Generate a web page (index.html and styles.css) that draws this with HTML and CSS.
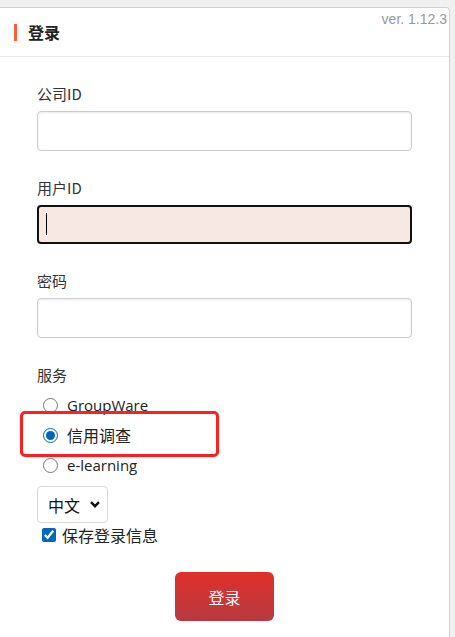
FILE: index.html
```html
<!DOCTYPE html>
<html>
    <head>
        <title>登录</title>
        <link rel="stylesheet" href="styles.css">
    </head>
    <body>
        <div class="card">
            <div class="card-head">
                <h1 class="title">登录</h1>
                <span class="version">ver. 1.12.3</span>
            </div>
            <form class="login">
                <div class="field">
                    <label class="label">公司ID</label>
                    <input type="text" class="input">
                </div>
                <div class="field">
                    <label class="label">用户ID</label>
                    <div class="input-wrap">
                        <input type="text" class="input focused">
                        <span class="caret"></span>
                    </div>
                </div>
                <div class="field">
                    <label class="label">密码</label>
                    <input type="password" class="input">
                </div>
                <div class="field services">
                    <label class="label">服务</label>
                    <label class="option"><input type="radio" name="svc"> <span class="latin">GroupWare</span></label>
                    <label class="option marked"><input type="radio" name="svc" checked> <span>信用调查</span><span class="mark"></span></label>
                    <label class="option"><input type="radio" name="svc"> <span class="latin">e-learning</span></label>
                </div>
                <div class="lang">
                    <select class="select">
                        <option>中文</option>
                    </select>
                    <svg class="chevron" width="10" height="7" viewBox="0 0 10 7"><path d="M1 1.2 L5 5.2 L9 1.2" fill="none" stroke="#111" stroke-width="2.4"/></svg>
                </div>
                <label class="remember"><input type="checkbox" checked> 保存登录信息</label>
                <div class="actions">
                    <button type="button" class="submit">登录</button>
                </div>
            </form>
        </div>
    </body>
</html>
```

FILE: styles.css
```css
html {
    background: #f0f0f0;
}
body {
    margin: 0;
    padding: 7px 5px 0 0;
    font-family: "Noto Sans CJK SC", "Noto Sans", sans-serif;
    color: #333;
}
.card {
    background: #fff;
    border: 1px solid #d0d0d0;
    border-left: none;
    border-bottom: none;
    border-radius: 0 4px 0 0;
    height: 640px;
}
.card-head {
    display: flex;
    justify-content: space-between;
    align-items: flex-start;
    height: 48px;
    border-bottom: 1px solid #e8e8e8;
}
.title {
    margin: 16px 0 0 14px;
    padding-left: 11px;
    border-left: 3px solid #ff5b38;
    font-size: 16px;
    line-height: 17px;
    height: 17px;
    font-weight: bold;
    color: #222;
}
.version {
    font-family: "Liberation Sans", Arial, sans-serif;
    font-size: 14px;
    color: #999;
    margin: 3px 2px 0 0;
}
.login {
    padding: 26px 37px 0 37px;
}
.field {
    margin-bottom: 26px;
}
.label {
    display: block;
    font-size: 15px;
    line-height: 22px;
    margin-bottom: 6px;
}
.input {
    display: block;
    box-sizing: border-box;
    width: 100%;
    height: 40px;
    border: 1px solid #ccc;
    border-radius: 4px;
    box-shadow: inset 0 1px 3px rgba(0, 0, 0, .08);
    background: #fff;
    outline: none;
    margin: 0;
}
.input-wrap {
    position: relative;
}
.focused {
    border: 2px solid #111;
    height: 39px;
    background: #f7e8e4;
    box-shadow: none;
}
.caret {
    position: absolute;
    left: 9px;
    top: 8px;
    width: 1px;
    height: 22px;
    background: #000;
}
.services {
    margin-bottom: 6px;
}
.services .label {
    margin-bottom: 4px;
}
.option {
    display: flex;
    align-items: center;
    height: 30px;
    font-size: 16px;
    color: #222;
    position: relative;
}
.option input {
    width: 15px;
    height: 15px;
    margin: 0 9px 0 6px;
    accent-color: #0067c0;
}
.latin {
    font-family: "Open Sans", "Noto Sans", sans-serif;
    font-size: 15px;
}
.mark {
    position: absolute;
    left: -17px;
    top: -9px;
    width: 199px;
    height: 46px;
    box-sizing: border-box;
    border: 3px solid #ff1f1f;
    border-radius: 5px;
}
.lang {
    position: relative;
    width: 71px;
}
.select {
    appearance: none;
    box-sizing: border-box;
    width: 71px;
    height: 37px;
    border: 1px solid #d8d8d8;
    border-radius: 4px;
    background: #fff;
    padding: 0 0 0 10px;
    font-family: "Noto Sans CJK SC", sans-serif;
    font-size: 16px;
    color: #111;
}
.chevron {
    position: absolute;
    right: 8px;
    top: 15px;
    pointer-events: none;
}
.remember {
    display: flex;
    align-items: center;
    height: 24px;
    font-size: 16px;
    color: #222;
}
.remember input {
    width: 14px;
    height: 14px;
    margin: 0 6px 0 5px;
    accent-color: #0067c0;
}
.actions {
    display: flex;
    justify-content: center;
    padding-top: 25px;
}
.submit {
    width: 99px;
    height: 49px;
    border: none;
    border-radius: 6px;
    background: linear-gradient(#e0302a, #b63a40);
    color: #fff;
    font-family: "Noto Sans CJK SC", sans-serif;
    font-size: 16px;
}
```
